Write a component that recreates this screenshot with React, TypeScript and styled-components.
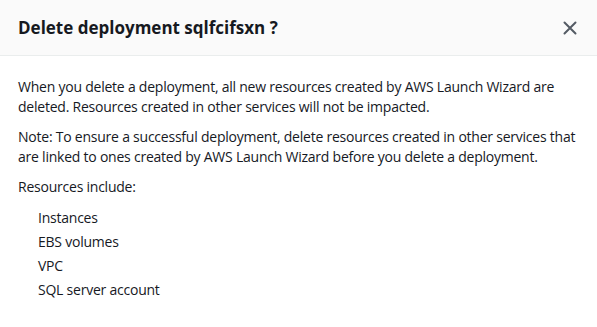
import styled, { createGlobalStyle } from "styled-components";

const GlobalStyle = createGlobalStyle`
  html, body {
    margin: 0;
    padding: 0;
    background: #ffffff;
  }
  body {
    font-family: "Open Sans", "Noto Sans", Arial, sans-serif;
    color: #16191f;
    -webkit-font-smoothing: antialiased;
  }
`;

const Modal = styled.div`
  width: 597px;
  height: 327px;
  background: #ffffff;
  display: flex;
  flex-direction: column;
`;

const Header = styled.div`
  height: 56px;
  box-sizing: border-box;
  display: flex;
  align-items: center;
  justify-content: space-between;
  padding: 0 18px;
  background: #fafafa;
  border-bottom: 1px solid #eaeded;
`;

const Title = styled.h2`
  margin: 0;
  font-size: 17px;
  font-weight: 700;
  line-height: 22px;
  color: #16191f;
`;

const CloseButton = styled.button`
  display: flex;
  align-items: center;
  justify-content: center;
  width: 24px;
  height: 24px;
  margin-right: -3px;
  padding: 0;
  border: none;
  background: transparent;
  color: #545b64;
  cursor: pointer;
`;

const Body = styled.div`
  padding: 21px 20px 0 18px;
  font-size: 14px;
  line-height: 20px;
  letter-spacing: -0.23px;
`;

const Para = styled.p`
  margin: 0 0 10px;
`;

const ResourceList = styled.ul`
  list-style: none;
  margin: 11px 0 0;
  padding: 0 0 0 20px;
  display: flex;
  flex-direction: column;
  gap: 4px;
`;

const Item = styled.li`
  line-height: 20px;
`;

const resources = ["Instances", "EBS volumes", "VPC", "SQL server account"];

export default function App() {
  return (
    <>
      <GlobalStyle />
      <Modal>
        <Header>
          <Title>Delete deployment sqlfcifsxn ?</Title>
          <CloseButton aria-label="Close">
            <svg width="14" height="14" viewBox="0 0 14 14" fill="none">
              <path
                d="M1.5 1.5 L12.5 12.5 M12.5 1.5 L1.5 12.5"
                stroke="currentColor"
                strokeWidth="2"
                strokeLinecap="round"
              />
            </svg>
          </CloseButton>
        </Header>
        <Body>
          <Para>
            When you delete a deployment, all new resources created by AWS Launch
            Wizard are deleted. Resources created in other services will not be
            impacted.
          </Para>
          <Para>
            Note: To ensure a successful deployment, delete resources created in
            other services that are linked to ones created by AWS Launch Wizard
            before you delete a deployment.
          </Para>
          <Para>Resources include:</Para>
          <ResourceList>
            {resources.map((r) => (
              <Item key={r}>{r}</Item>
            ))}
          </ResourceList>
        </Body>
      </Modal>
    </>
  );
}
